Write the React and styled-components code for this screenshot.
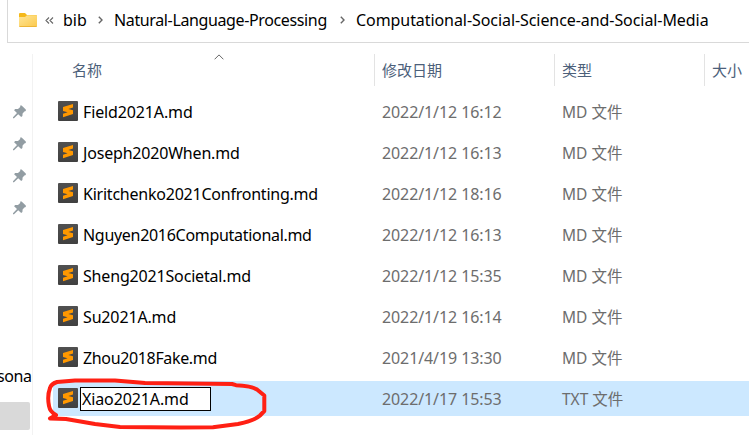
import React from "react";
import styled, { createGlobalStyle } from "styled-components";

const GlobalStyle = createGlobalStyle`
  * { box-sizing: border-box; }
  body {
    margin: 0;
    background: #fff;
    overflow: hidden;
    font-family: "Noto Sans", "Noto Sans CJK SC", sans-serif;
    font-size: 16px;
    line-height: 24px;
    color: #000;
  }
`;

const Window = styled.div`
  position: relative;
  width: 749px;
  height: 435px;
  overflow: hidden;
  display: flex;
  flex-direction: column;
`;

const AddressBar = styled.div`
  height: 43px;
  flex: none;
  margin-left: 7px;
  border-left: 1px solid #d9d9d9;
  border-bottom: 1px solid #d9d9d9;
  padding: 0 0 2px 11px;
  display: flex;
  align-items: center;
`;

const Crumb = styled.span`
  width: ${(p) => p.$width}px;
  letter-spacing: ${(p) => p.$spacing || 0}px;
  white-space: nowrap;
  flex: none;
`;

const Glyph = styled.svg`
  display: block;
  flex: none;
  margin-left: ${(p) => p.$left || 0}px;
  margin-right: ${(p) => p.$right || 0}px;
  margin-bottom: ${(p) => p.$bottom || 0}px;
`;

const Body = styled.div`
  flex: 1;
  display: flex;
  min-height: 0;
`;

const Sidebar = styled.div`
  width: 33px;
  flex: none;
  margin-top: 11px;
  padding-top: 51px;
  border-right: 1px solid #f2f2f2;
  overflow: hidden;
`;

const PinSlot = styled.div`
  height: 32px;
  padding-left: 13px;
`;

const DriveLabel = styled.div`
  margin-top: 131px;
  margin-left: -3px;
  height: 32px;
  letter-spacing: -0.45px;
`;

const SidebarSelection = styled.div`
  margin-top: 6px;
  width: 30px;
  height: 28px;
  background: #d9d9d9;
  border-radius: 0 2px 2px 0;
`;

const Files = styled.div`
  flex: 1;
  padding: 11px 0 0 20px;
`;

const columns = "321px 180px 150px 1fr";

const Header = styled.div`
  display: grid;
  grid-template-columns: ${columns};
  height: 32px;
  margin-bottom: 8px;
  color: #4c607a;
  font-size: 15px;
`;

const HeaderCell = styled.div`
  display: flex;
  align-items: center;
  padding-left: ${(p) => (p.$first ? 19 : 7)}px;
  border-left: ${(p) => (p.$first ? "none" : "1px solid #e3e3e3")};
`;

const Row = styled.div`
  display: grid;
  grid-template-columns: ${columns};
  align-items: center;
  height: 35px;
  margin-bottom: 6px;
  background: ${(p) => (p.$selected ? "#cce8ff" : "transparent")};
`;

const NameCell = styled.div`
  display: flex;
  align-items: center;
  padding-left: 5px;
`;

const FileName = styled.span`
  margin-left: 5px;
  letter-spacing: ${(p) => p.$spacing}px;
  white-space: nowrap;
`;

const RenameBox = styled.div`
  width: 131px;
  height: 24px;
  margin: 1px 0 0 2px;
  padding-left: 1px;
  border: 1px solid #000;
  background: #fff;
  line-height: 22px;
  letter-spacing: ${(p) => p.$spacing}px;
`;

const Meta = styled.div`
  padding-left: 8px;
  color: #6d6d6d;
  font-size: ${(p) => p.$size || 16}px;
  letter-spacing: ${(p) => p.$spacing || 0}px;
  white-space: nowrap;
`;

const Annotation = styled.svg`
  position: absolute;
  left: 0;
  top: 0;
  pointer-events: none;
`;

const Folder = () => (
  <Glyph width="18" height="14" viewBox="0 0 18 14">
    <defs>
      <linearGradient id="folder" x1="0" y1="0" x2="1" y2="1">
        <stop offset="0" stopColor="#ffe698" />
        <stop offset="1" stopColor="#fbc94c" />
      </linearGradient>
    </defs>
    <path d="M0 1Q0 0 1 0H6L8 2H17Q18 2 18 3V8H0Z" fill="#f5b91b" />
    <path d="M0 4H6L8 2.2H18V13Q18 14 17 14H1Q0 14 0 13Z" fill="url(#folder)" />
    <path d="M0.5 13.5H17.5" stroke="#edb536" />
  </Glyph>
);

const Chevron = ({ left, right }) => (
  <Glyph width="5" height="8" viewBox="0 0 5 8" $left={left} $right={right}>
    <path d="M0.8 0.7L4 4L0.8 7.3" fill="none" stroke="#666" strokeWidth="1.4" />
  </Glyph>
);

const Overflow = () => (
  <Glyph width="9" height="7" viewBox="0 0 9 7" $left={8} $right={9}>
    <path d="M4 0.5L1 3.5L4 6.5M8 0.5L5 3.5L8 6.5" fill="none" stroke="#666" strokeWidth="1.1" />
  </Glyph>
);

const SortArrow = () => (
  <Glyph width="10" height="6" viewBox="0 0 10 6">
    <path d="M0.6 5.3L5 0.9L9.4 5.3" fill="none" stroke="#666" />
  </Glyph>
);

const SortSlot = styled.div`
  align-self: flex-start;
  margin-left: 112px;
`;

const Pin = () => (
  <Glyph width="13" height="14" viewBox="0 0 13 14">
    <path
      d="M7.2 0.6L8.6 0.4L12.8 4.6L12.8 6L11.4 6.4L9.6 8.6L9.4 11L8.2 12L5.2 9.3L1 13.3L0 13.3L0 12.3L4 8.1L1.1 5.3L2.1 4.1L5 3.9L7.2 2Z"
      fill="#929da3"
    />
  </Glyph>
);

const SublimeIcon = () => (
  <Glyph width="20" height="20" viewBox="0 0 20 20" $bottom={1}>
    <defs>
      <linearGradient id="tile" x1="0" y1="0" x2="0" y2="1">
        <stop offset="0" stopColor="#505050" />
        <stop offset="1" stopColor="#404040" />
      </linearGradient>
    </defs>
    <rect width="20" height="20" rx="1" fill="url(#tile)" />
    <path d="M5 6L15 2.9V6.4L10.4 8L15 9.2V12.9L5 16.2V12.8L9.6 11.2L5 9.9Z" fill="#ff9800" />
  </Glyph>
);

const files = [
  { name: "Field2021A.md", spacing: -0.13, date: "2022/1/12 16:12" },
  { name: "Joseph2020When.md", spacing: -0.19, date: "2022/1/12 16:13" },
  { name: "Kiritchenko2021Confronting.md", spacing: -0.23, date: "2022/1/12 18:16" },
  { name: "Nguyen2016Computational.md", spacing: -0.3, date: "2022/1/12 16:13" },
  { name: "Sheng2021Societal.md", spacing: -0.17, date: "2022/1/12 15:35" },
  { name: "Su2021A.md", spacing: -0.15, date: "2022/1/12 16:14" },
  { name: "Zhou2018Fake.md", spacing: -0.35, date: "2021/4/19 13:30" },
  { name: "Xiao2021A.md", spacing: -0.12, date: "2022/1/17 15:53", type: "TXT", renaming: true },
];

export default function App() {
  return (
    <>
      <GlobalStyle />
      <Window>
        <AddressBar>
          <Folder />
          <Overflow />
          <Crumb $width={24}>bib</Crumb>
          <Chevron left={11} right={11} />
          <Crumb $width={215} $spacing={-0.37}>
            Natural-Language-Processing
          </Crumb>
          <Chevron left={11} right={11} />
          <Crumb $width={355} $spacing={-0.07}>
            Computational-Social-Science-and-Social-Media
          </Crumb>
        </AddressBar>
        <Body>
          <Sidebar>
            {[0, 1, 2, 3].map((i) => (
              <PinSlot key={i}>
                <Pin />
              </PinSlot>
            ))}
            <DriveLabel>sona</DriveLabel>
            <SidebarSelection />
          </Sidebar>
          <Files>
            <Header>
              <HeaderCell $first>
                名称
                <SortSlot>
                  <SortArrow />
                </SortSlot>
              </HeaderCell>
              <HeaderCell>修改日期</HeaderCell>
              <HeaderCell>类型</HeaderCell>
              <HeaderCell>大小</HeaderCell>
            </Header>
            {files.map((f) => (
              <Row key={f.name} $selected={f.renaming}>
                <NameCell>
                  <SublimeIcon />
                  {f.renaming ? (
                    <RenameBox $spacing={f.spacing}>{f.name}</RenameBox>
                  ) : (
                    <FileName $spacing={f.spacing}>{f.name}</FileName>
                  )}
                </NameCell>
                <Meta $spacing={-0.1}>{f.date}</Meta>
                <Meta $size={15.5}>{f.type || "MD"} 文件</Meta>
              </Row>
            ))}
          </Files>
        </Body>
        <Annotation width="749" height="435" viewBox="0 0 749 435">
          <path
            d="M56 415L50 418.5Q58 418.5 66 419L95 424L120 427L180 427.5L213 427.2L238 424Q254 421 260 415.5L264.3 411V395.5L257 389.5Q252 386 236 385.2L232 384L145 383L115 380.5L75 380.5L57 382Q51 384 50 388Q47 396 49 406Q50 412 56 415"
            fill="none"
            stroke="#ff2014"
            strokeWidth="4"
            strokeLinejoin="round"
            strokeLinecap="round"
          />
        </Annotation>
      </Window>
    </>
  );
}
